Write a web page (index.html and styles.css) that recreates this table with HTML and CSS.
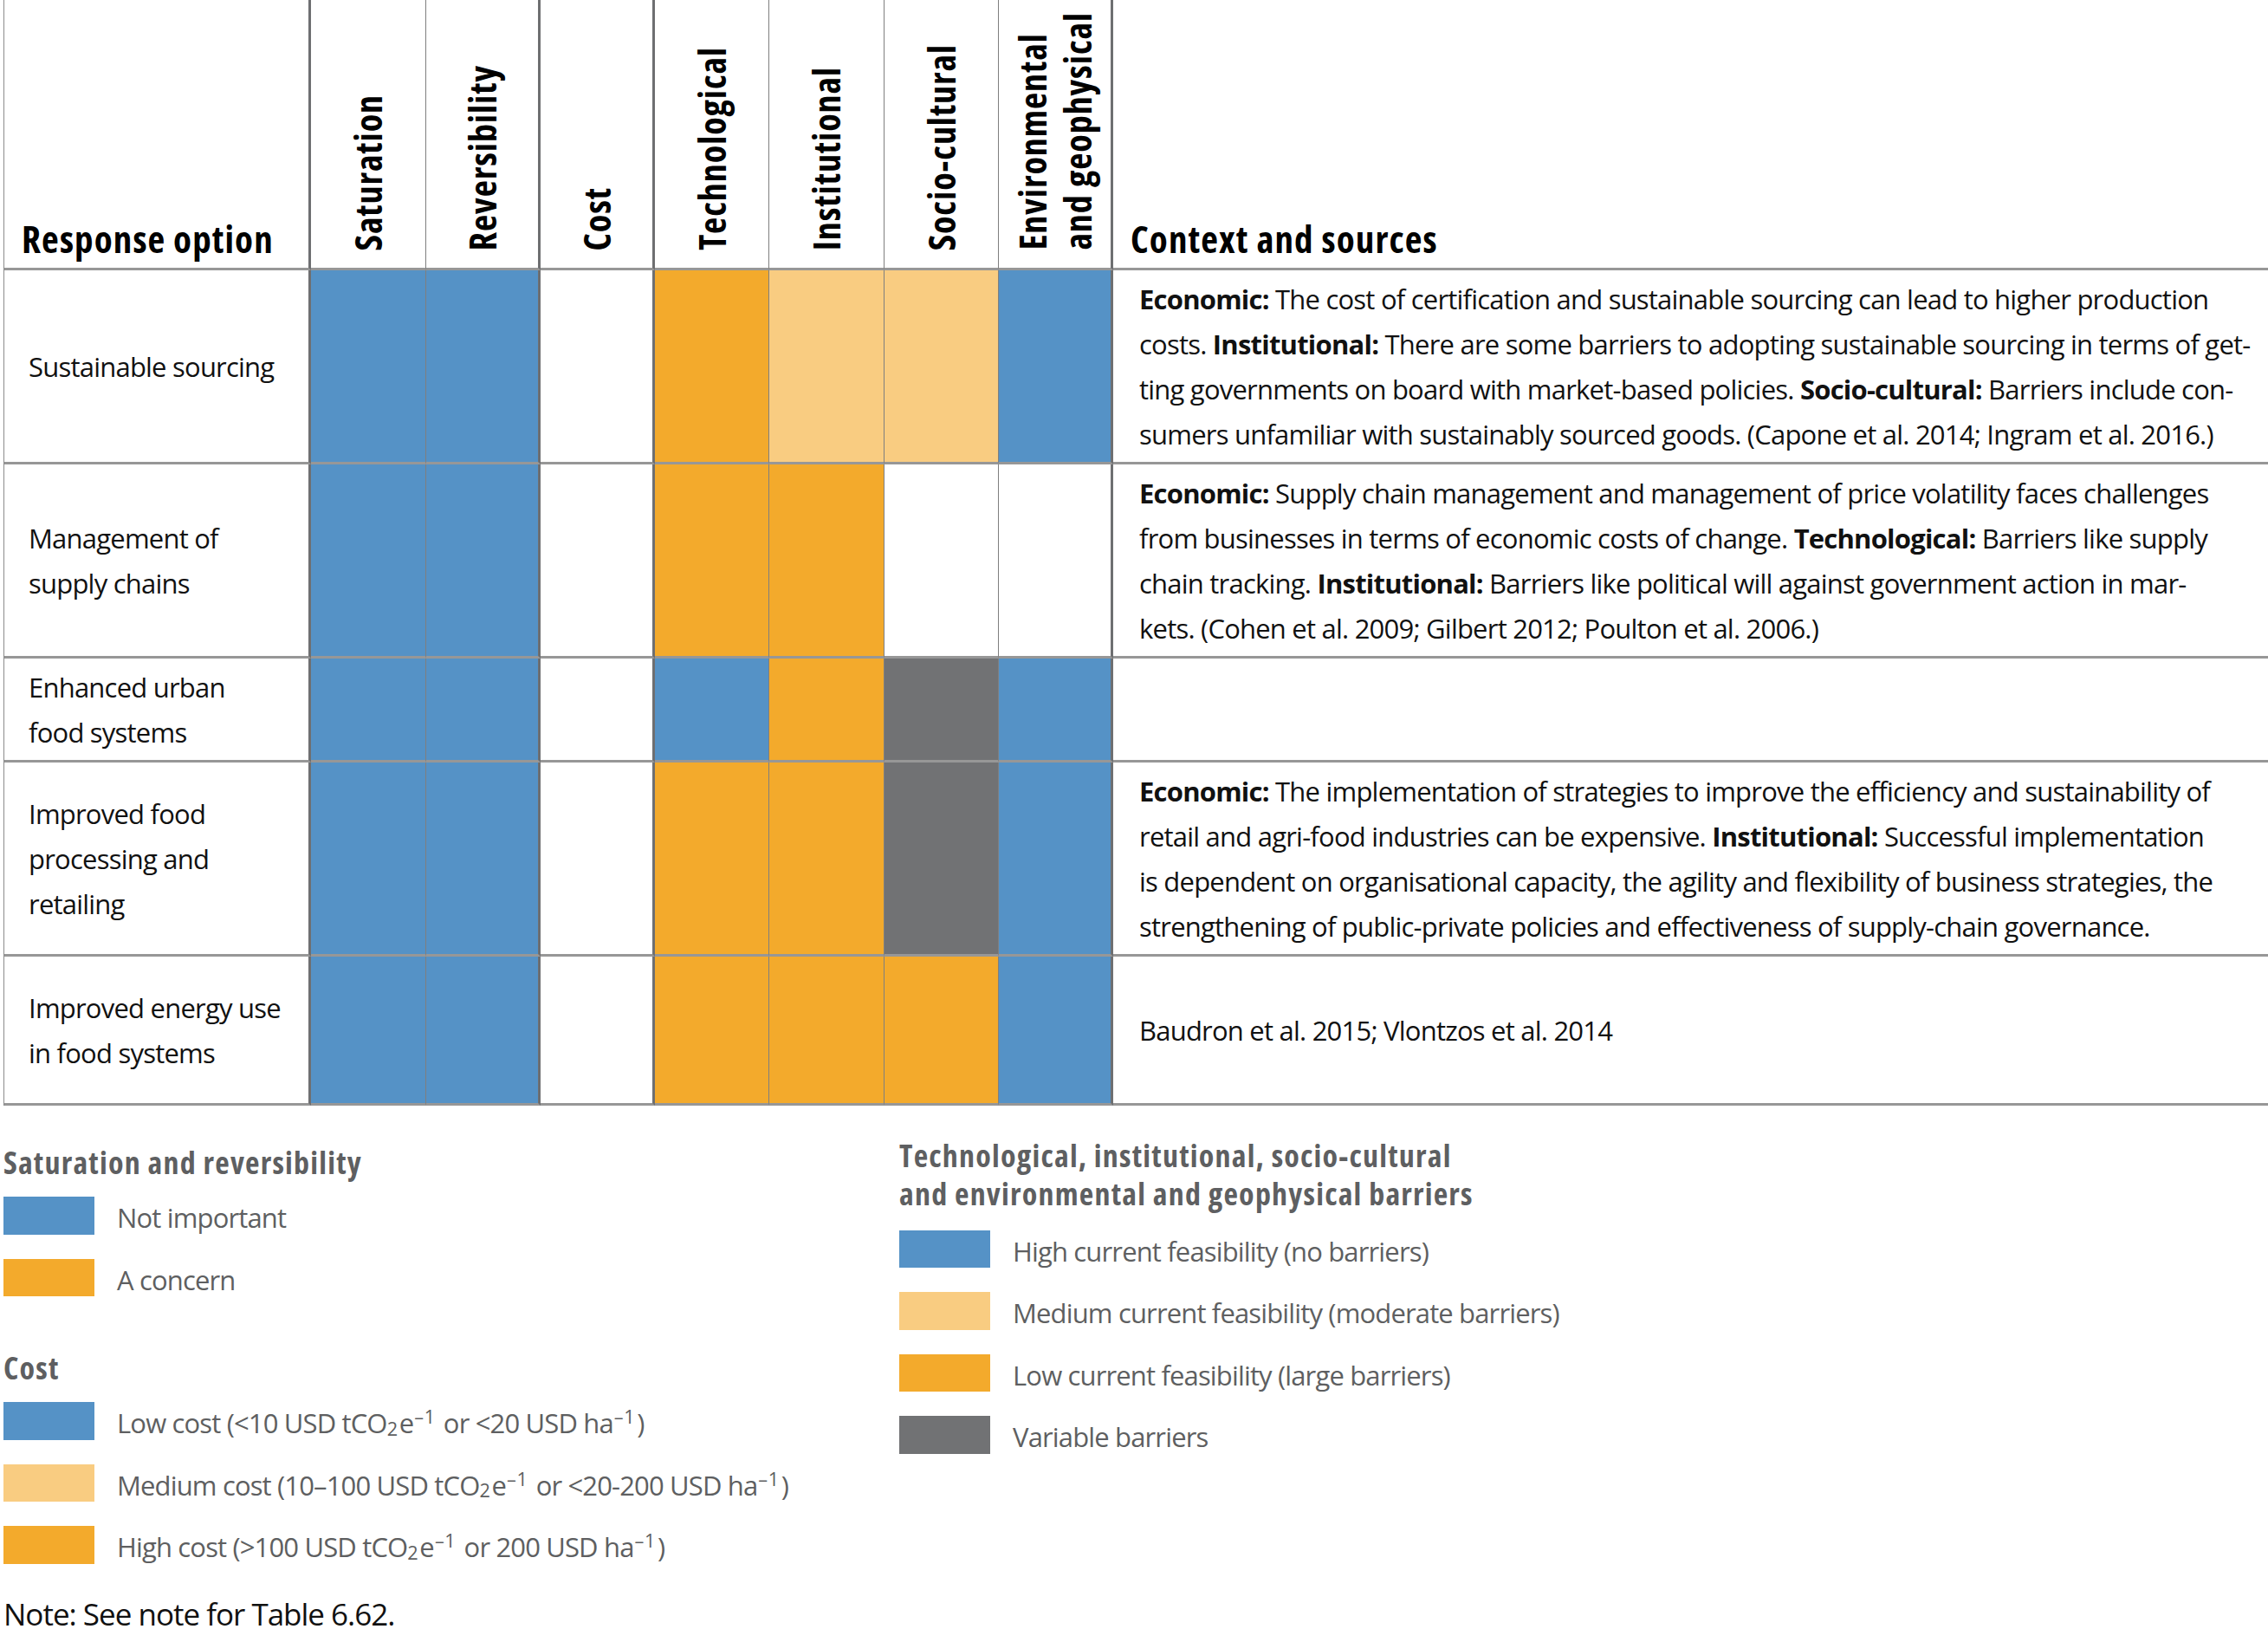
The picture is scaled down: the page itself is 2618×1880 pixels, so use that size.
FILE: index.html
```html
<!DOCTYPE html>
<html lang="en">
<head>
<meta charset="utf-8">
<title>Response options table</title>
<link rel="stylesheet" href="styles.css">
</head>
<body>
<div class="page">
  <div class="table">
    <div class="cell hd hd-label">Response option</div>
    <div class="cell hd hd-vert"><span>Saturation</span></div>
    <div class="cell hd hd-vert"><span>Reversibility</span></div>
    <div class="cell hd hd-vert"><span>Cost</span></div>
    <div class="cell hd hd-vert"><span>Technological</span></div>
    <div class="cell hd hd-vert"><span>Institutional</span></div>
    <div class="cell hd hd-vert"><span>Socio-cultural</span></div>
    <div class="cell hd hd-vert"><span>Environmental<br>and geophysical</span></div>
    <div class="cell hd hd-ctx">Context and sources</div>

    <div class="cell label">Sustainable sourcing</div>
    <div class="cell blue"></div>
    <div class="cell blue"></div>
    <div class="cell"></div>
    <div class="cell orange"></div>
    <div class="cell light"></div>
    <div class="cell light"></div>
    <div class="cell blue"></div>
    <div class="cell ctx"><p><b>Economic:</b> The cost of certification and sustainable sourcing can lead to higher production<br>costs. <b>Institutional:</b> There are some barriers to adopting sustainable sourcing in terms of get-<br>ting governments on board with market-based policies. <b>Socio-cultural:</b> Barriers include con-<br>sumers unfamiliar with sustainably sourced goods. (Capone et al. 2014; Ingram et al. 2016.)</p></div>

    <div class="cell label">Management of<br>supply chains</div>
    <div class="cell blue"></div>
    <div class="cell blue"></div>
    <div class="cell"></div>
    <div class="cell orange"></div>
    <div class="cell orange"></div>
    <div class="cell"></div>
    <div class="cell"></div>
    <div class="cell ctx"><p><b>Economic:</b> Supply chain management and management of price volatility faces challenges<br>from businesses in terms of economic costs of change. <b>Technological:</b> Barriers like supply<br>chain tracking. <b>Institutional:</b> Barriers like political will against government action in mar-<br>kets. (Cohen et al. 2009; Gilbert 2012; Poulton et al. 2006.)</p></div>

    <div class="cell label">Enhanced urban<br>food systems</div>
    <div class="cell blue"></div>
    <div class="cell blue"></div>
    <div class="cell"></div>
    <div class="cell blue"></div>
    <div class="cell orange"></div>
    <div class="cell gray"></div>
    <div class="cell blue"></div>
    <div class="cell ctx"></div>

    <div class="cell label">Improved food<br>processing and<br>retailing</div>
    <div class="cell blue"></div>
    <div class="cell blue"></div>
    <div class="cell"></div>
    <div class="cell orange"></div>
    <div class="cell orange"></div>
    <div class="cell gray"></div>
    <div class="cell blue"></div>
    <div class="cell ctx"><p><b>Economic:</b> The implementation of strategies to improve the efficiency and sustainability of<br>retail and agri-food industries can be expensive. <b>Institutional:</b> Successful implementation<br>is dependent on organisational capacity, the agility and flexibility of business strategies, the<br>strengthening of public-private policies and effectiveness of supply-chain governance.</p></div>

    <div class="cell label">Improved energy use<br>in food systems</div>
    <div class="cell blue"></div>
    <div class="cell blue"></div>
    <div class="cell"></div>
    <div class="cell orange"></div>
    <div class="cell orange"></div>
    <div class="cell orange"></div>
    <div class="cell blue"></div>
    <div class="cell ctx"><p>Baudron et al. 2015; Vlontzos et al. 2014</p></div>
  </div>

  <div class="legend">
    <div class="lg-col lg-left">
      <div class="lg-title t-sat">Saturation and reversibility</div>
      <div class="lg-item first"><span class="sw blue"></span><span class="lg-text">Not important</span></div>
      <div class="lg-item"><span class="sw orange"></span><span class="lg-text">A concern</span></div>
      <div class="lg-title t-cost">Cost</div>
      <div class="lg-item first"><span class="sw blue"></span><span class="lg-text">Low cost (&lt;10 USD tCO<sub>2</sub>e<sup>–1</sup> or &lt;20 USD ha<sup>–1</sup>)</span></div>
      <div class="lg-item"><span class="sw light"></span><span class="lg-text">Medium cost (10–100 USD tCO<sub>2</sub>e<sup>–1</sup> or &lt;20-200 USD ha<sup>–1</sup>)</span></div>
      <div class="lg-item"><span class="sw orange"></span><span class="lg-text">High cost (&gt;100 USD tCO<sub>2</sub>e<sup>–1</sup> or 200 USD ha<sup>–1</sup>)</span></div>
      <div class="note">Note: See note for Table 6.62.</div>
    </div>
    <div class="lg-col lg-right">
      <div class="lg-title t-bar">Technological, institutional, socio-cultural<br>and environmental and geophysical barriers</div>
      <div class="lg-item first"><span class="sw blue"></span><span class="lg-text">High current feasibility (no barriers)</span></div>
      <div class="lg-item"><span class="sw light"></span><span class="lg-text">Medium current feasibility (moderate barriers)</span></div>
      <div class="lg-item"><span class="sw orange"></span><span class="lg-text">Low current feasibility (large barriers)</span></div>
      <div class="lg-item"><span class="sw gray"></span><span class="lg-text">Variable barriers</span></div>
    </div>
  </div>
</div>
</body>
</html>
```

FILE: styles.css
```css
* { box-sizing: border-box; }
html, body { margin: 0; padding: 0; background: #fff; }
body {
  font-family: "Open Sans", "Liberation Sans", sans-serif;
  color: #111;
}
.page { width: 2618px; padding-left: 4px; }

.table {
  display: grid;
  grid-template-columns: 354px 133px 132px 132px 132px 133px 132px 132px 1334px;
  grid-template-rows: 312px 224px 224px 120px 224px 172px;
  width: 2614px;
  border-left: 1px solid #8c8c8c;
}
.cell {
  border-right: 1px solid #7f7f7f;
  border-bottom: 3px solid #979797;
  min-width: 0;
}
.cell:nth-child(9n+1),
.cell:nth-child(9n+3),
.cell:nth-child(9n+4),
.cell:nth-child(9n+8) { border-right: 3px solid #6e6f71; }

.blue { background: #5592c6; }
.orange { background: #f3aa2c; }
.light { background: #f9cc81; }
.gray { background: #717274; }

/* header row: bold condensed */
.hd {
  display: flex;
  align-items: flex-end;
  font-weight: bold;
  font-stretch: 75%;
  color: #000;
}
.hd-label, .hd-ctx {
  font-size: 43px;
  letter-spacing: 1.1px;
  line-height: 50px;
  padding: 0 0 8px 20px;
}
.hd-vert { justify-content: center; padding-bottom: 20px; font-size: 42px; letter-spacing: 0.9px; }
.hd-vert span {
  writing-mode: vertical-rl;
  transform: rotate(180deg);
  line-height: 52px;
  white-space: nowrap;
}

/* body rows */
.label, .ctx {
  display: flex;
  align-items: center;
  font-size: 31px;
  letter-spacing: -0.78px;
  line-height: 52px;
}
.label { padding-left: 28px; }
.ctx { padding-left: 30px; }
.ctx p { margin: 0; white-space: nowrap; }

/* legend */
.legend { display: flex; color: #5e5f61; }
.lg-col { display: flex; flex-direction: column; }
.lg-left { width: 1034px; }
.lg-title {
  font-weight: bold;
  font-stretch: 75%;
  font-size: 36px;
  letter-spacing: 1.2px;
  line-height: 43.5px;
}
.t-sat { margin-top: 44px; }
.t-cost { margin-top: 61px; }
.t-bar { margin-top: 36px; }
.lg-item { display: flex; height: 43.5px; margin-top: 28px; }
.lg-item.first { margin-top: 17.5px; }
.lg-right .lg-item.first { margin-top: 20.5px; }
.sw { width: 105px; height: 43.5px; flex: none; margin-right: 26px; }
.lg-text {
  font-size: 31px;
  letter-spacing: -0.85px;
  line-height: 43.5px;
  padding-top: 3px;
  white-space: nowrap;
}
.lg-text sub, .lg-text sup { font-size: 0.7em; line-height: 0; letter-spacing: 0.6px; }
.lg-text sub { vertical-align: -0.12em; margin-right: 1px; }
.lg-text sup { vertical-align: 0.5em; margin-left: 1px; margin-right: 2px; }
.note {
  margin-top: 39px;
  font-size: 35px;
  letter-spacing: -1px;
  line-height: 38px;
  color: #111;
}
```
